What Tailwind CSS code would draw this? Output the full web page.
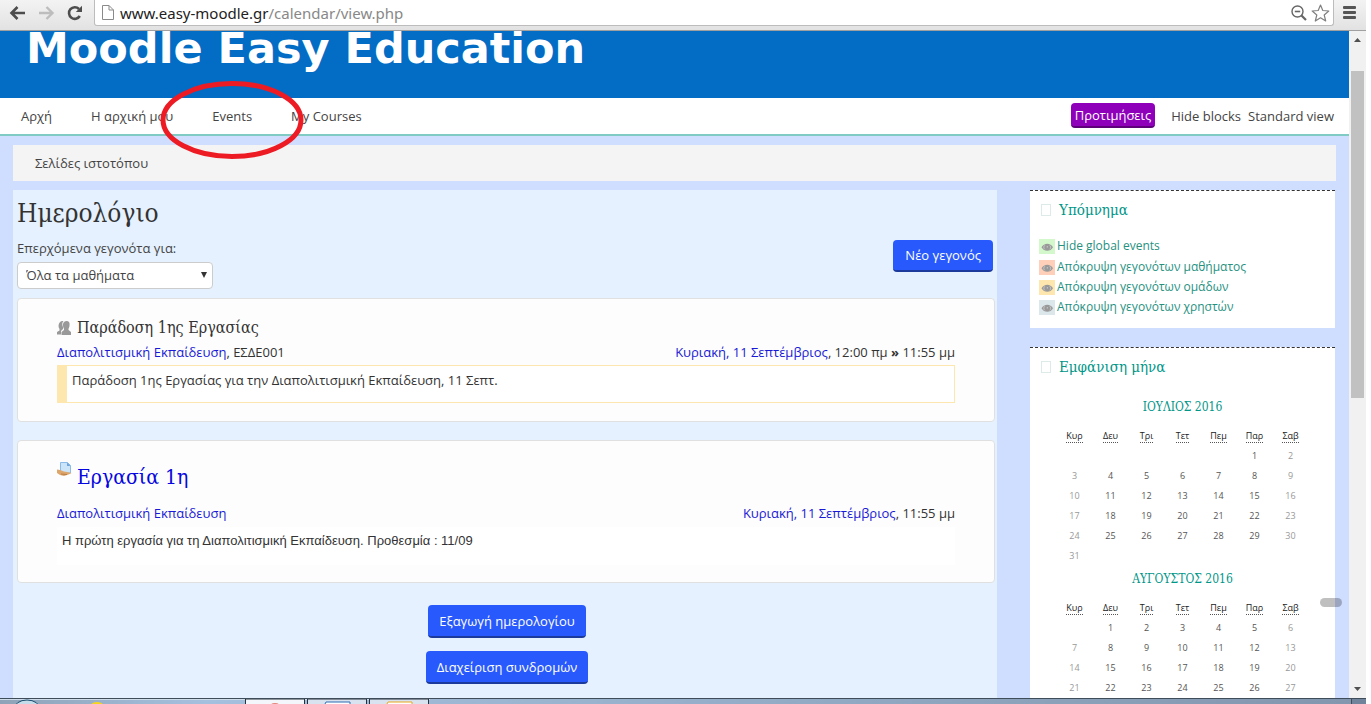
<!DOCTYPE html>
<html lang="el">
<head>
<meta charset="utf-8">
<title>Ημερολόγιο</title>
<script src="https://cdn.jsdelivr.net/npm/@tailwindcss/browser@4"></script>
</head>
<body class="bg-white">
<div class="relative mr-[5px] flex h-screen flex-col overflow-hidden font-['Open_Sans','Noto_Sans',sans-serif] text-[13px] leading-5 text-[#333]">

  <!-- Browser toolbar -->
  <header class="flex h-[31px] shrink-0 items-start border-b border-[#a0a0a0] bg-gradient-to-b from-[#f3f3f3] to-[#e2e2e2] pl-[9px] pr-[10px]">
    <div class="flex h-[25px] items-center gap-[12px]">
      <button aria-label="Back"><svg class="block" width="17" height="16" viewBox="0 0 17 16" fill="none" stroke="#4d4d4d" stroke-width="2.6"><path d="M16 8H3M8.500 2L2.500 8l6 6"/></svg></button>
      <button aria-label="Forward"><svg class="block" width="17" height="16" viewBox="0 0 17 16" fill="none" stroke="#bdbdbd" stroke-width="2.400"><path d="M1 8h13M8.500 2l6 6-6 6"/></svg></button>
      <button aria-label="Reload"><svg class="block" width="16" height="16" viewBox="0 0 16 16"><path d="M12.800 11A5.800 5.800 0 1 1 12 4" fill="none" stroke="#4d4d4d" stroke-width="2.600"/><path d="M15 .8V7H8.800z" fill="#4d4d4d"/></svg></button>
    </div>
    <div class="ml-[11px] flex h-[26px] flex-1 items-center rounded-b-[3px] border border-t-0 border-[#bcbcbc] bg-white pl-[7px] pr-[3px]">
      <svg class="shrink-0" width="12" height="15" viewBox="0 0 12 15" fill="#fff" stroke="#8a8a8a"><path d="M.5.5h6.500l4.500 4.500v9.500H.5zM7 .5V5h4.500"/></svg>
      <p class="ml-[6px] flex-1 font-['Noto_Sans','Open_Sans',sans-serif] text-[15px] leading-6 text-[#888]"><span class="text-[#222]">www.easy-moodle.gr</span>/calendar/view.php</p>
      <button aria-label="Zoom"><svg class="block" width="16" height="16" viewBox="0 0 16 16" fill="none" stroke="#666"><circle cx="6.500" cy="6.500" r="5.500" stroke-width="1.400"/><path d="M3.800 6.500h5.400" stroke-width="1.600"/><path d="M10.500 10.500l4.500 4.500" stroke-width="2.200"/></svg></button>
      <button class="ml-1" aria-label="Bookmark"><svg class="block" width="19" height="18" viewBox="0 0 19 18" fill="#fff" stroke="#808080" stroke-width="1.200" stroke-linejoin="round"><path d="M9.500 1l2.300 5.500 6 .5-4.600 4 1.500 6-5.200-3.200L4.300 17l1.500-6L1.200 7l6-.5z"/></svg></button>
    </div>
    <button class="ml-[9px] mt-[6px]" aria-label="Menu"><svg class="block" width="13" height="13" viewBox="0 0 13 13" fill="#555"><rect width="13" height="3" rx="1"/><rect y="5" width="13" height="3" rx="1"/><rect y="10" width="13" height="3" rx="1"/></svg></button>
  </header>

  <div class="flex min-h-0 flex-1">
    <!-- Web page -->
    <div class="relative min-w-0 flex-1 overflow-hidden bg-[#cfddff]">
      <div class="flex h-[67px] items-center bg-[#036cc4] pb-8 pl-[26px]">
        <h1 class="whitespace-nowrap font-['DejaVu_Sans',sans-serif] text-[43px] font-bold leading-[35px] text-white">Moodle Easy Education</h1>
      </div>
      <nav class="flex h-[38px] items-center justify-between border-b-2 border-[#80cbc4] bg-white pb-px pl-[21px] pr-[15px] text-[#444]">
        <div class="flex gap-[39px]"><a href="#">Αρχή</a><a href="#">Η αρχική μου</a><a href="#">Events</a><a href="#">My Courses</a></div>
        <div class="flex items-center gap-[7px]">
          <button class="mr-[9px] h-[25px] rounded-[4px] border-b-2 border-[#5d007a] bg-[#8e00b9] px-1 text-white">Προτιμήσεις</button>
          <a href="#">Hide blocks</a><a href="#">Standard view</a>
        </div>
      </nav>

      <div class="ml-[13px] mr-[13px] mt-[9px] flex h-9 items-center bg-[#f4f4f4] pl-[22px] text-[#444]">Σελίδες ιστοτόπου</div>

      <div class="ml-[13px] mr-[14px] mt-[9px] flex gap-[33px]">
        <main class="min-h-[520px] min-w-0 flex-1 bg-[#e5f1fe] pl-1 pr-[2px] pt-2">
          <h2 class="font-['DejaVu_Serif_Condensed','DejaVu_Serif',serif] text-[26px] leading-[30px]">Ημερολόγιο</h2>
          <div class="mt-[10px] flex h-[50px] items-start justify-between pr-[2px]">
            <div class="flex flex-col">
              <label for="course" class="text-[#444]">Επερχόμενα γεγονότα για:</label>
              <div class="relative mt-1 w-[196px]">
                <select id="course" class="block h-[27px] w-full appearance-none rounded-[4px] border border-[#ccc] bg-white pb-[2px] pl-2 text-[#444]"><option>Όλα τα μαθήματα</option></select>
                <svg class="pointer-events-none absolute right-[6px] top-[10px]" width="6" height="6" viewBox="0 0 6 6"><path d="M0 0h6L3 6z" fill="#333"/></svg>
              </div>
            </div>
            <button class="mt-[2px] h-8 rounded-[4px] border-b-2 border-[#1b3a9c] bg-[#2859fc] px-3 text-white">Νέο γεγονός</button>
          </div>

          <article class="mt-[10px] h-[124px] rounded-[4px] border border-[#e0e0e0] bg-[#fdfdfd] px-[39px] pt-[19px]">
            <h3 class="flex items-center gap-[6px] font-['DejaVu_Serif_Condensed','DejaVu_Serif',serif] text-[16px] leading-5">
              <svg width="14" height="14" viewBox="0 0 14 14" fill="#999"><path d="M5 0h1.500C5 1.500 5 4 6 6v2L4 10v3.500H0V11l2.500-1.500V8C1 6 1 1 5 0z"/><path d="M9.500 0C12 0 13 2 12.500 4.500c0 1.500-.8 2.500-1 3.500v1L14 11v3H4.500v-3L7 9V8C5 4 6 0 9.500 0z"/></svg>
              Παράδοση 1ης Εργασίας</h3>
            <div class="mt-1 flex justify-between">
              <p><a href="#" class="text-[#1a1ad6]">Διαπολιτισμική Εκπαίδευση</a>, ΕΣΔΕ001</p>
              <p><a href="#" class="text-[#1a1ad6]">Κυριακή, 11 Σεπτέμβριος</a>, 12:00 πμ <b>»</b> 11:55 μμ</p>
            </div>
            <p class="mt-[3px] h-[38px] border border-l-[10px] border-[#fee7ae] bg-white pl-[5px] pt-1">Παράδοση 1ης Εργασίας για την Διαπολιτισμική Εκπαίδευση, 11 Σεπτ.</p>
          </article>

          <article class="mt-[18px] h-[143px] rounded-[4px] border border-[#e0e0e0] bg-[#fdfdfd] px-[39px] pt-[20px]">
            <h3 class="flex items-start gap-[5px] font-['DejaVu_Serif_Condensed','DejaVu_Serif',serif] text-[21px] leading-8">
              <svg width="15" height="16" viewBox="0 0 15 16"><path d="M3.500 1.500h7l3 3V12h-10z" fill="#cbe4f8" stroke="#8dbbe8"/><path d="M10 1.500V5h3.500z" fill="#6ba4de"/><path d="M0 8.500l3 .5 4 1.500 3 .5 4.500 1-3 1.500L7 15l-4-1-3-2z" fill="#dfa66c"/><path d="M4 13l6 .5" stroke="#b77d48"/></svg>
              <a href="#" class="text-[#0606e0]">Εργασία 1η</a></h3>
            <div class="mt-[10px] flex justify-between">
              <a href="#" class="text-[#1a1ad6]">Διαπολιτισμική Εκπαίδευση</a>
              <p><a href="#" class="text-[#1a1ad6]">Κυριακή, 11 Σεπτέμβριος</a>, 11:55 μμ</p>
            </div>
            <p class="mt-1 h-[38px] bg-white pl-[5px] pt-1 font-['Liberation_Sans',sans-serif]">Η πρώτη εργασία για τη Διαπολιτισμική Εκπαίδευση. Προθεσμία : 11/09</p>
          </article>

          <div class="mt-[22px] flex flex-col items-center gap-[13px] pl-[2px]">
            <button class="h-[33px] rounded-[4px] border-b-2 border-[#1b3a9c] bg-[#2859fc] px-[11px] text-white">Εξαγωγή ημερολογίου</button>
            <button class="h-[33px] rounded-[4px] border-b-2 border-[#1b3a9c] bg-[#2859fc] px-[11px] text-white">Διαχείριση συνδρομών</button>
          </div>
        </main>

        <aside class="flex w-[305px] shrink-0 flex-col gap-[19px]">
          <section class="h-[138px] border-t border-dashed border-[#333] bg-white px-[9px] pt-[9px]">
            <h2 class="flex items-center gap-2 pl-[2px] font-['DejaVu_Serif_Condensed','DejaVu_Serif',serif] text-[15px] leading-5 text-[#009688]"><span class="h-3 w-[10px] border border-[#dcebea]"></span>Υπόμνημα</h2>
            <ul class="mt-4 text-[12px] text-[#26917f]">
              <li class="flex h-[21px] items-start"><a href="#" class="flex items-center gap-[2px]"><svg class="bg-[#d3f8cc]" width="16" height="15" viewBox="0 0 16 15"><use href="#eye"/></svg>Hide global events</a></li>
              <li class="flex h-5 items-center"><a href="#" class="flex items-center gap-[2px]"><svg class="bg-[#ffd0b9]" width="16" height="15" viewBox="0 0 16 15"><g id="eye"><path d="M2.500 8.300C5 3.500 11.500 3.500 14 8.300 11.500 13 5 13 2.500 8.300z" fill="#999"/><path d="M5.800 6.300c-1.300 1-1.300 3 0 4M10.700 6.300c1.300 1 1.300 3 0 4M8.300 7v1.600" fill="none" stroke="#ddd" stroke-width=".7"/></g></svg>Απόκρυψη γεγονότων μαθήματος</a></li>
              <li class="flex h-5 items-center"><a href="#" class="flex items-center gap-[2px]"><svg class="bg-[#fee7ae]" width="16" height="15" viewBox="0 0 16 15"><use href="#eye"/></svg>Απόκρυψη γεγονότων ομάδων</a></li>
              <li class="flex h-5 items-center"><a href="#" class="flex items-center gap-[2px]"><svg class="bg-[#dce7ec]" width="16" height="15" viewBox="0 0 16 15"><use href="#eye"/></svg>Απόκρυψη γεγονότων χρηστών</a></li>
            </ul>
          </section>

          <section class="border-t border-dashed border-[#333] bg-white px-[9px] pt-[9px]">
            <h2 class="flex items-center gap-2 pl-[2px] font-['DejaVu_Serif_Condensed','DejaVu_Serif',serif] text-[15px] leading-5 text-[#009688]"><span class="h-3 w-[10px] border border-[#dcebea]"></span>Εμφάνιση μήνα</h2>

            <table class="mx-auto mt-5 w-[252px] table-fixed text-center text-[9px] text-[#555] [&_abbr]:border-b [&_abbr]:border-dotted [&_abbr]:border-[#555] [&_abbr]:no-underline [&_td]:h-5 [&_td]:p-0 [&_td:first-child]:text-[#999] [&_td:last-child]:text-[#999] [&_th]:h-5 [&_th]:p-0 [&_th]:font-medium [&_th]:leading-3 [&_th]:text-[#222]">
              <caption class="pb-[9px] font-['DejaVu_Serif_Condensed','DejaVu_Serif',serif] text-[12px] leading-5 text-[#009688]"><a href="#">ΙΟΥΛΙΟΣ 2016</a></caption>
              <thead><tr><th><abbr>Κυρ</abbr></th><th><abbr>Δευ</abbr></th><th><abbr>Τρι</abbr></th><th><abbr>Τετ</abbr></th><th><abbr>Πεμ</abbr></th><th><abbr>Παρ</abbr></th><th><abbr>Σαβ</abbr></th></tr></thead>
              <tbody>
                <tr><td></td><td></td><td></td><td></td><td></td><td>1</td><td>2</td></tr>
                <tr><td>3</td><td>4</td><td>5</td><td>6</td><td>7</td><td>8</td><td>9</td></tr>
                <tr><td>10</td><td>11</td><td>12</td><td>13</td><td>14</td><td>15</td><td>16</td></tr>
                <tr><td>17</td><td>18</td><td>19</td><td>20</td><td>21</td><td>22</td><td>23</td></tr>
                <tr><td>24</td><td>25</td><td>26</td><td>27</td><td>28</td><td>29</td><td>30</td></tr>
                <tr><td>31</td><td></td><td></td><td></td><td></td><td></td><td></td></tr>
              </tbody>
            </table>

            <table class="mx-auto mt-[3px] w-[252px] table-fixed text-center text-[9px] text-[#555] [&_abbr]:border-b [&_abbr]:border-dotted [&_abbr]:border-[#555] [&_abbr]:no-underline [&_td]:h-5 [&_td]:p-0 [&_td:first-child]:text-[#999] [&_td:last-child]:text-[#999] [&_th]:h-5 [&_th]:p-0 [&_th]:font-medium [&_th]:leading-3 [&_th]:text-[#222]">
              <caption class="pb-[9px] font-['DejaVu_Serif_Condensed','DejaVu_Serif',serif] text-[12px] leading-5 text-[#009688]"><a href="#">ΑΥΓΟΥΣΤΟΣ 2016</a></caption>
              <thead><tr><th><abbr>Κυρ</abbr></th><th><abbr>Δευ</abbr></th><th><abbr>Τρι</abbr></th><th><abbr>Τετ</abbr></th><th><abbr>Πεμ</abbr></th><th><abbr>Παρ</abbr></th><th><abbr>Σαβ</abbr></th></tr></thead>
              <tbody>
                <tr><td></td><td>1</td><td>2</td><td>3</td><td>4</td><td>5</td><td>6</td></tr>
                <tr><td>7</td><td>8</td><td>9</td><td>10</td><td>11</td><td>12</td><td>13</td></tr>
                <tr><td>14</td><td>15</td><td>16</td><td>17</td><td>18</td><td>19</td><td>20</td></tr>
                <tr><td>21</td><td>22</td><td>23</td><td>24</td><td>25</td><td>26</td><td>27</td></tr>
              </tbody>
            </table>
          </section>
        </aside>
      </div>
    </div>

    <!-- Page scrollbar -->
    <div class="flex w-[17px] shrink-0 flex-col items-center bg-[#f1f1f1]">
      <svg class="mt-[7px]" width="7" height="4" viewBox="0 0 7 4"><path d="M0 4l3.500-4L7 4z" fill="#505050"/></svg>
      <div class="mt-[29px] h-[327px] w-[13px] bg-[#c1c1c1]"></div>
      <svg class="mb-[7px] mt-auto" width="7" height="4" viewBox="0 0 7 4"><path d="M0 0h7L3.500 4z" fill="#505050"/></svg>
    </div>
  </div>

  <!-- Taskbar -->
  <footer class="flex h-[6px] shrink-0 items-start overflow-hidden border-t border-[#3f4c5a] bg-gradient-to-r from-[#8fa3b8] via-[#a5c0de] via-15% to-[#8296ad]">
    <svg class="block" width="430" height="5" viewBox="0 0 430 5">
      <rect width="430" height="1" fill="#cfdcea"/>
      <ellipse cx="27" cy="10" rx="13" ry="9" fill="#c5dcea" stroke="#1d4f70"/>
      <ellipse cx="97" cy="6" rx="6" ry="3" fill="#f7d51e"/>
      <g fill="#d8e3ef" stroke="#26323e"><path d="M245.500 6V0h59v6z" fill="#f3f6fa"/><path d="M307.500 6V0h59v6zM369.500 6V0h59v6z"/></g>
      <ellipse cx="275" cy="6" rx="4" ry="2" fill="#e58378"/>
      <path d="M325 5l1-2h24v2" fill="#fff" stroke="#2f6bb3"/><path d="M387 5l1-2h24v2" fill="#fff" stroke="#e9a71c"/>
    </svg>
    <div class="ml-auto h-[5px] w-[15px] border-l border-[#3f4c5a] bg-[#70839a]"></div>
  </footer>

  <!-- Annotation ring and drag pill, floating over the window -->
  <svg class="pointer-events-none absolute left-[160px] top-[80px]" width="145" height="80" viewBox="0 0 145 80"><ellipse cx="72" cy="40" rx="69" ry="36.500" fill="none" stroke="#ed1c24" stroke-width="5"/></svg>
  <div class="absolute right-[24px] top-[598px] h-[9px] w-[22px] rounded-full bg-black/25"></div>
</div>
</body>
</html>
